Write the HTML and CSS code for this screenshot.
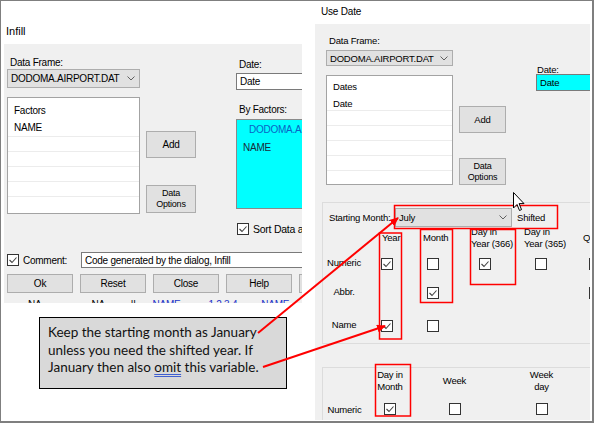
FILE: index.html
```html
<!DOCTYPE html>
<html>
<head>
<meta charset="utf-8">
<link rel="stylesheet" href="styles.css">
</head>
<body>
<div class="canvas">

  <section class="win win-infill">
    <div class="win-title title-infill">Infill</div>
    <div class="win-body infill-body">
      <div class="if-top">
        <div class="if-col1">
          <div class="lbl lbl-df">Data Frame:</div>
          <div class="combo combo-if"><span>DODOMA.AIRPORT.DAT</span><svg class="chev" width="8" height="5" viewBox="0 0 8 5"><polyline points="0.5,0.5 4,4 7.5,0.5"/></svg></div>
          <div class="list list-if">
            <div class="row item">Factors</div>
            <div class="row item">NAME</div>
            <div class="row empty"></div>
            <div class="row empty"></div>
            <div class="row empty"></div>
            <div class="row empty"></div>
            <div class="row empty"></div>
          </div>
        </div>
        <div class="if-col2">
          <div class="btn btn-add-if">Add</div>
          <div class="btn btn-opt btn-opt-if">Data<br>Options</div>
        </div>
        <div class="if-col3">
          <div class="lbl lbl-date-if">Date:</div>
          <div class="field field-date-if">Date</div>
          <div class="lbl lbl-by">By Factors:</div>
          <div class="cyan-box">
            <div class="cy-df">DODOMA.AIRPORT.DAT</div>
            <div class="cy-name">NAME</div>
          </div>
          <div class="sort-row">
            <span class="cb"><svg viewBox="0 0 10 10"><path d="M1.5 5 L4 7.5 L8.5 2.5"/></svg></span>
            <span class="sort-text">Sort Data and Fill by Factors</span>
          </div>
        </div>
      </div>
      <div class="comment-row">
        <span class="cb"><svg viewBox="0 0 10 10"><path d="M1.5 5 L4 7.5 L8.5 2.5"/></svg></span>
        <span class="comment-lbl">Comment:</span>
        <div class="field field-comment">Code generated by the dialog, Infill</div>
      </div>
      <div class="btn-row">
        <div class="btn btn-bottom">Ok</div>
        <div class="btn btn-bottom">Reset</div>
        <div class="btn btn-bottom">Close</div>
        <div class="btn btn-bottom">Help</div>
        <div class="btn btn-bottom">To Script</div>
      </div>
      <div class="peek-row">
        <span class="pk pk1">NA</span>
        <span class="pk pk2">NA</span>
        <span class="pk pk3">||</span>
        <span class="pk pk4 blue">NAME</span>
        <span class="pk pk5 blue">1 2 3 4</span>
        <span class="pk pk6 blue">NAME</span>
      </div>
    </div>
  </section>

  <section class="win win-usedate">
    <div class="win-title title-ud">Use Date</div>
    <div class="win-body ud-body">
      <div class="ud-top">
        <div class="ud-col1">
          <div class="lbl lbl-df-ud">Data Frame:</div>
          <div class="combo combo-ud"><span>DODOMA.AIRPORT.DAT</span><svg class="chev" width="8" height="5" viewBox="0 0 8 5"><polyline points="0.5,0.5 4,4 7.5,0.5"/></svg></div>
          <div class="list list-ud">
            <div class="row item item1">Dates</div>
            <div class="row item item2">Date</div>
            <div class="row empty"></div>
            <div class="row empty"></div>
            <div class="row empty"></div>
            <div class="row empty"></div>
            <div class="row empty"></div>
          </div>
        </div>
        <div class="ud-col2">
          <div class="btn btn-add-ud">Add</div>
          <div class="btn btn-opt btn-opt-ud">Data<br>Options</div>
        </div>
        <div class="ud-col3">
          <div class="lbl lbl-date-ud">Date:</div>
          <div class="field field-date-ud">Date</div>
        </div>
      </div>

      <div class="group group1">
        <div class="start-row">
          <span class="start-lbl">Starting Month:</span>
          <div class="combo combo-month"><span>July</span><svg class="chev" width="8" height="5" viewBox="0 0 8 5"><polyline points="0.5,0.5 4,4 7.5,0.5"/></svg></div>
          <span class="shifted">Shifted</span>
        </div>
        <div class="grid1">
          <div></div>
          <div class="hd hd-year">Year</div>
          <div class="hd hd-month">Month</div>
          <div class="hd hd-d366">Day in<br>Year (366)</div>
          <div class="hd hd-d365">Day in<br>Year (365)</div>
          <div class="hd hd-q">Quarter</div>

          <div class="rlbl">Numeric</div>
          <span class="cb"><svg viewBox="0 0 10 10"><path d="M1.5 5 L4 7.5 L8.5 2.5"/></svg></span>
          <span class="cb"></span>
          <span class="cb"><svg viewBox="0 0 10 10"><path d="M1.5 5 L4 7.5 L8.5 2.5"/></svg></span>
          <span class="cb"></span>
          <span class="cb"></span>

          <div class="rlbl">Abbr.</div>
          <span></span>
          <span class="cb"><svg viewBox="0 0 10 10"><path d="M1.5 5 L4 7.5 L8.5 2.5"/></svg></span>
          <span></span>
          <span></span>
          <span class="cb"></span>

          <div class="rlbl">Name</div>
          <span class="cb"><svg viewBox="0 0 10 10"><path d="M1.5 5 L4 7.5 L8.5 2.5"/></svg></span>
          <span class="cb"></span>
          <span></span>
          <span></span>
          <span></span>
        </div>
      </div>

      <div class="group group2">
        <div class="grid2">
          <div></div>
          <div class="hd2">Day in<br>Month</div>
          <div class="hd2">Week</div>
          <div class="hd2">Week<br>day</div>

          <div class="rlbl">Numeric</div>
          <span class="cb"><svg viewBox="0 0 10 10"><path d="M1.5 5 L4 7.5 L8.5 2.5"/></svg></span>
          <span class="cb"></span>
          <span class="cb"></span>
        </div>
      </div>
    </div>
  </section>

  <div class="callout">Keep the starting month as January<br>unless you need the shifted year. If<br>January then also <span class="omit">omit</span> this variable.</div>

  <svg class="annot" width="594" height="423" viewBox="0 0 594 423">
    <defs>
      <marker id="ah" markerWidth="9" markerHeight="8" refX="8" refY="4" orient="auto" markerUnits="userSpaceOnUse">
        <path d="M0,0 L9,4 L0,8 z" fill="#ff0000"/>
      </marker>
    </defs>
    <g fill="none" stroke="#ff0000" stroke-width="1.5">
      <rect x="394.5" y="205.5" width="163" height="23"/>
      <rect x="379.5" y="233" width="22" height="106"/>
      <rect x="420.5" y="229.5" width="32" height="73"/>
      <rect x="470.5" y="229.5" width="45" height="55"/>
      <rect x="375.5" y="364.5" width="35" height="51.5"/>
    </g>
    <g stroke="#ff0000" stroke-width="2">
      <line x1="258" y1="333" x2="398" y2="218" marker-end="url(#ah)"/>
      <line x1="263" y1="367" x2="385" y2="326" marker-end="url(#ah)"/>
    </g>
  </svg>

  <svg class="cursor" width="12" height="20" viewBox="0 0 12 20">
    <path d="M0.5 0.5 V16 L4 12.5 L6.5 18.5 L8.5 17.6 L6.1 11.6 H11 Z" fill="#fff" stroke="#000" stroke-width="1" stroke-linejoin="round"/>
  </svg>
</div>
</body>
</html>
```

FILE: styles.css
```css
* { box-sizing: border-box; }

body {
  margin: 0;
  background: #fff;
  font-family: "Liberation Sans", Arial, sans-serif;
}

.canvas {
  position: relative;
  width: 594px;
  height: 423px;
  border: 1px solid #7f7f7f;
  border-right-width: 2px;
  border-bottom-width: 2px;
  overflow: hidden;
  background: #fff;
  color: #000;
  font-size: 10px;
}

/* windows on the canvas */
.win {
  position: absolute;
  top: 0;
  display: flex;
  flex-direction: column;
}
.win-infill { left: 0; width: 301px; }
.win-usedate { left: 314px; width: 275px; }

.win-title { white-space: nowrap; }
.title-infill {
  height: 43px;
  padding: 24px 0 0 5px;
  font-size: 11px;
  line-height: 13px;
}
.title-ud {
  height: 23px;
  padding: 5px 0 0 6px;
  font-size: 10px;
  line-height: 12px;
  letter-spacing: -0.2px;
}

.win-body {
  background: #f0f0f0;
  overflow: hidden;
  display: flex;
  flex-direction: column;
  white-space: nowrap;
}

/* common controls */
.lbl { height: 13px; line-height: 13px; }

.combo {
  display: flex;
  align-items: center;
  justify-content: space-between;
  background: #e1e1e1;
  border: 1px solid #adadad;
  padding: 0 4px 0 3px;
}
.chev polyline { fill: none; stroke: #606060; stroke-width: 1; }

.list {
  background: #fff;
  border: 1px solid #a3a3a3;
  overflow: hidden;
}
.row.empty { border-top: 1px solid #ececec; height: 15px; }

.btn {
  display: flex;
  align-items: center;
  justify-content: center;
  text-align: center;
  background: #e1e1e1;
  border: 1px solid #adadad;
}
.btn-opt { font-size: 9px; line-height: 11px; }

.field {
  background: #fff;
  border: 1px solid #7a7a7a;
  padding-left: 3px;
  display: flex;
  align-items: center;
  flex-shrink: 0;
}

.cb {
  width: 12px;
  height: 12px;
  border: 1px solid #333;
  background: #fff;
  display: inline-flex;
  align-items: center;
  justify-content: center;
  flex-shrink: 0;
}
.cb svg { width: 10px; height: 10px; }
.cb path { fill: none; stroke: #444; stroke-width: 1.1; }

/* ---------- Infill dialog ---------- */
.infill-body {
  margin-left: 3px;
  width: 298px;
  height: 259px;
  padding-left: 3px;
  font-size: 10px;
  letter-spacing: -0.25px;
}
.if-top { display: flex; }
.if-col1 { width: 133px; flex-shrink: 0; display: flex; flex-direction: column; }
.lbl-df { margin-top: 12px; padding-left: 3px; }
.combo-if { height: 19px; }
.list-if { margin-top: 9px; height: 117px; padding: 4px 0 0 6px; }
.list-if .item { height: 17px; line-height: 17px; }
.list-if .row.empty { margin-left: -6px; }

.if-col2 { width: 50px; flex-shrink: 0; margin-left: 6px; display: flex; flex-direction: column; }
.btn-add-if { margin-top: 87px; height: 27px; }
.btn-opt-if { margin-top: 27px; height: 28px; }

.if-col3 { margin-left: 40px; width: 120px; flex-shrink: 0; display: flex; flex-direction: column; }
.lbl-date-if { margin-top: 14px; padding-left: 3px; }
.field-date-if { margin-top: 2px; height: 17px; width: 120px; }
.lbl-by { margin-top: 13px; padding-left: 3px; }
.cyan-box {
  margin-top: 3px;
  height: 90px;
  width: 120px;
  background: #00ffff;
  border: 1px solid #8a8a8a;
}
.cy-df { color: #0a63c4; padding: 4px 0 0 12px; line-height: 12px; }
.cy-name { color: #1b2b3b; padding: 6px 0 0 6px; line-height: 12px; }
.sort-row { margin-top: 14px; height: 12px; display: flex; align-items: center; margin-left: 1px; }
.sort-text { margin-left: 4px; font-size: 10.5px; }

.comment-row { margin-top: 17px; height: 16px; display: flex; align-items: center; }
.comment-lbl { flex: 0 0 58px; margin-left: 4px; }
.field-comment { width: 240px; height: 16px; }

.btn-row { margin-top: 6px; height: 19px; display: flex; gap: 7px; }
.btn-bottom { width: 66px; flex-shrink: 0; }

.peek-row { margin-top: 7px; height: 3px; overflow: hidden; display: flex; line-height: 10px; font-size: 10px; }
.pk { flex-shrink: 0; }
.pk1 { margin-left: 21px; }
.pk2 { margin-left: 50px; }
.pk3 { margin-left: 26px; }
.pk4 { margin-left: 17px; text-decoration: underline; }
.pk5 { margin-left: 28px; }
.pk6 { margin-left: 24px; }
.blue { color: #1a30c8; }

/* ---------- Use Date dialog ---------- */
.ud-body {
  width: 275px;
  height: 396px;
  padding-left: 7px;
  font-size: 9.5px;
  letter-spacing: -0.2px;
}
.ud-top { display: flex; padding-left: 4px; }
.ud-col1 { width: 127px; flex-shrink: 0; display: flex; flex-direction: column; }
.lbl-df-ud { margin-top: 11px; height: 12px; line-height: 12px; padding-left: 3px; }
.combo-ud { margin-top: 3px; height: 16px; }
.list-ud { margin-top: 9px; height: 110px; padding: 3px 0 0 6px; }
.list-ud .item1 { height: 16px; line-height: 16px; }
.list-ud .item2 { height: 15px; line-height: 17px; }
.list-ud .row.empty { margin-left: -6px; }

.ud-col2 { width: 47px; flex-shrink: 0; margin-left: 6px; display: flex; flex-direction: column; }
.btn-add-ud { margin-top: 82px; height: 27px; }
.btn-opt-ud { margin-top: 25px; height: 27px; }

.ud-col3 { margin-left: 30px; width: 70px; flex-shrink: 0; display: flex; flex-direction: column; }
.lbl-date-ud { margin-top: 41px; height: 9px; line-height: 10px; padding-left: 1px; }
.field-date-ud { height: 17px; width: 70px; background: #00ffff; padding-left: 3px; }

.group {
  border: 1px solid #dcdcdc;
  width: 290px;
  flex-shrink: 0;
}
.group1 { margin-top: 17px; height: 142px; }
.group2 { margin-top: 23px; height: 80px; }

.start-row { margin-top: 5px; height: 19px; display: flex; align-items: center; }
.start-lbl { flex: 0 0 72px; padding-left: 6px; }
.combo-month { width: 117px; height: 19px; flex-shrink: 0; }
.shifted { margin-left: 5px; }

.grid1 {
  margin-top: -1px;
  display: grid;
  grid-template-columns: 58px 46px 52px 56px 54px 40px;
  grid-template-rows: 24px 27px 32px 33px;
  align-items: center;
  justify-items: start;
}
.hd { line-height: 12px; }
.hd-year { margin-left: 1px; }
.hd-month { margin-left: -4px; }
.hd-d366 { margin-left: -8px; }
.hd-d365 { margin-left: -11px; }
.hd-q { margin-left: -6px; }
.rlbl { width: 42px; text-align: center; margin-bottom: 3px; }

.grid2 {
  margin-top: 1px;
  display: grid;
  grid-template-columns: 43px 48px 81px 93px;
  grid-template-rows: 24px 32px;
  align-items: center;
  justify-items: center;
}
.hd2 { line-height: 12px; text-align: center; }
.grid2 .rlbl { width: 43px; margin-bottom: 0; }

/* ---------- annotations ---------- */
.callout {
  position: absolute;
  left: 38px;
  top: 316px;
  width: 248px;
  height: 72px;
  border: 1px solid #000;
  background: #d9d9d9;
  padding: 6px 0 0 8px;
  font-family: "Lato", "Liberation Sans", sans-serif;
  font-size: 13.5px;
  line-height: 17.5px;
  color: #111;
  white-space: nowrap;
}
.omit {
  text-decoration: underline double #3f5fd0;
  text-underline-offset: 2px;
}

.annot {
  position: absolute;
  left: -1px;
  top: -1px;
  pointer-events: none;
}
.cursor {
  position: absolute;
  left: 512px;
  top: 191px;
}
```
